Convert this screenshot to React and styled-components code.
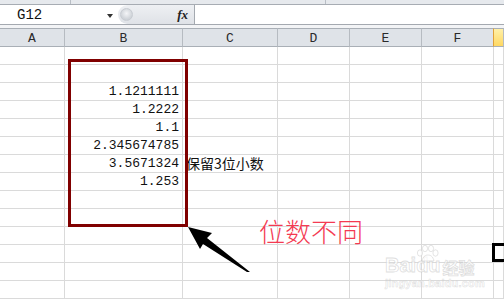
import React from "react";
import styled, { createGlobalStyle } from "styled-components";

const Global = createGlobalStyle`
  html, body { margin: 0; padding: 0; background: #fff; }
  body { width: 504px; height: 300px; overflow: hidden; }
`;

const Page = styled.div`
  position: relative;
  width: 504px;
  height: 300px;
  overflow: hidden;
  background: #fff;
  font-family: "Liberation Mono", monospace;
`;

const TopStrip = styled.div`
  height: 4px;
  background: #e6e9ed;
  border-bottom: 1px solid #a7acb3;
  display: flex;
`;

const StripSeg = styled.div`
  width: ${(p) => p.w}px;
  border-right: 1px solid #b9bec5;
`;

const FormulaBar = styled.div`
  display: flex;
  height: 19px;
  border-bottom: 1px solid #a4a9b0;
  background: #fff;
`;

const NameBox = styled.div`
  width: 118px;
  display: flex;
  align-items: center;
  justify-content: space-between;
  padding: 0 5px 0 17px;
  box-sizing: border-box;
  font-size: 14px;
  color: #111;
`;

const DropArrow = styled.span`
  width: 0;
  height: 0;
  border-left: 3.5px solid transparent;
  border-right: 3.5px solid transparent;
  border-top: 4px solid #333;
  margin-top: 2px;
`;

const FxArea = styled.div`
  width: 77px;
  display: flex;
  align-items: center;
  justify-content: space-between;
  padding: 0 6px 0 2px;
  box-sizing: border-box;
  background: linear-gradient(#eef0f3, #dfe2e7);
  border-radius: 10px 0 0 10px;
  border-right: 1px solid #a4a9b0;
`;

const RoundBtn = styled.span`
  width: 13px;
  height: 13px;
  border-radius: 50%;
  background: radial-gradient(circle at 50% 40%, #f4f5f7 0%, #d3d7dc 60%, #c2c7cd 100%);
  border: 1px solid #c8ccd2;
  box-sizing: border-box;
`;

const Fx = styled.span`
  font-family: "Liberation Serif", serif;
  font-style: italic;
  font-weight: bold;
  font-size: 13px;
  color: #222;
`;

const FormulaInput = styled.div`
  flex: 1;
  background: #fff;
`;

const Spacer = styled.div`
  height: 3px;
  background: #f3f4f6;
`;

const Sheet = styled.div`
  display: grid;
  grid-template-columns: 65px 118px 95px 72px 72px 72px 1fr;
`;

const HeaderCell = styled.div`
  height: 19px;
  box-sizing: border-box;
  border-top: 1px solid #a9afb6;
  border-bottom: 1px solid #a9afb6;
  border-right: 1px solid ${(p) => (p.next ? "#e0a13a" : "#b6bbc1")};
  background: ${(p) =>
    p.selected
      ? "linear-gradient(#fff0a8, #ffd862)"
      : "#dfe3e8"};
  display: flex;
  align-items: center;
  justify-content: center;
  font-size: 13px;
  color: #2a2a2a;
  padding-top: 1px;
`;

const Cell = styled.div`
  position: relative;
  height: 18px;
  box-sizing: border-box;
  border-right: 1px solid #dadada;
  border-bottom: 1px solid #dadada;
  display: flex;
  align-items: center;
  justify-content: ${(p) => (p.num ? "flex-end" : "flex-start")};
  padding: ${(p) => (p.num ? "0 3px 0 0" : "0 0 0 3px")};
  font-size: 13px;
  color: #111;
  white-space: nowrap;
  overflow: visible;
  z-index: ${(p) => (p.text ? 2 : 1)};
`;

const CjkText = styled.span`
  font-family: "Noto Sans CJK SC", sans-serif;
  font-size: 14px;
  line-height: 17px;
  color: #111;
`;

const ActiveCell = styled.div`
  position: absolute;
  left: -2px;
  top: -2px;
  width: 30px;
  height: 19px;
  border: 3px solid #000;
  box-sizing: border-box;
`;

const RedBox = styled.div`
  position: absolute;
  left: 68px;
  top: 59px;
  width: 120px;
  height: 168px;
  border: 3px solid #800000;
  box-sizing: border-box;
  z-index: 5;
`;

const Overlay = styled.svg`
  position: absolute;
  left: 0;
  top: 0;
  z-index: 6;
`;

const Note = styled.div`
  position: absolute;
  left: 259px;
  top: 214px;
  font-family: "Noto Sans CJK SC", sans-serif;
  font-weight: 300;
  font-size: 26px;
  line-height: 34px;
  color: #f43a52;
  z-index: 6;
`;

const Watermark = styled.div`
  position: absolute;
  left: 385px;
  top: 245px;
  width: 92px;
  display: flex;
  flex-direction: column;
  align-items: flex-start;
  z-index: 4;
  pointer-events: none;
`;

const MarkRow = styled.div`
  display: flex;
  align-items: flex-end;
  position: relative;
  height: 30px;
`;

const MarkText = styled.span`
  font-family: ${(p) => (p.cjk ? '"Noto Sans CJK SC", sans-serif' : '"Liberation Sans", sans-serif')};
  font-weight: bold;
  font-size: ${(p) => p.size}px;
  line-height: 1;
  color: rgba(255, 255, 255, 0.75);
  -webkit-text-stroke: 0.8px rgba(190, 190, 190, 0.5);
  margin-left: ${(p) => p.ml || 0}px;
`;

const MarkUrl = styled.span`
  font-family: "Liberation Sans", sans-serif;
  font-size: 11px;
  font-weight: bold;
  color: rgba(255, 255, 255, 0.75);
  -webkit-text-stroke: 0.6px rgba(190, 190, 190, 0.45);
  margin-top: 2px;
  letter-spacing: 0.2px;
`;

const Paw = styled.svg`
  position: absolute;
  left: 30px;
  top: 0;
`;

const columns = ["A", "B", "C", "D", "E", "F", ""];

const data = {
  3: { B: "1.1211111" },
  4: { B: "1.2222" },
  5: { B: "1.1" },
  6: { B: "2.345674785" },
  7: { B: "3.5671324", C: "保留3位小数" },
  8: { B: "1.253" },
};

export default function App() {
  const rows = Array.from({ length: 14 }, (_, i) => i + 1);
  const keys = ["A", "B", "C", "D", "E", "F", "G"];
  return (
    <Page>
      <Global />
      <TopStrip>
        <StripSeg w={70} />
        <StripSeg w={254} />
      </TopStrip>
      <FormulaBar>
        <NameBox>
          G12
          <DropArrow />
        </NameBox>
        <FxArea>
          <RoundBtn />
          <Fx>fx</Fx>
        </FxArea>
        <FormulaInput />
      </FormulaBar>
      <Spacer />
      <Sheet>
        {columns.map((c, i) => (
          <HeaderCell key={"h" + i} selected={i === 6} next={i === 5}>
            {c}
          </HeaderCell>
        ))}
        {rows.map((r) =>
          keys.map((k) => {
            const v = data[r] && data[r][k];
            const isNum = k === "B" && v;
            return (
              <Cell key={r + k} num={isNum} text={k === "C" && v}>
                {k === "C" && v ? <CjkText>{v}</CjkText> : v}
                {k === "G" && r === 12 && <ActiveCell />}
              </Cell>
            );
          })
        )}
      </Sheet>
      <RedBox />
      <Overlay width="504" height="300" viewBox="0 0 504 300">
        <polygon
          points="188,227 212,233 207,238 250,272 247,272 203,244 200,249"
          fill="#000"
        />
      </Overlay>
      <Note>位数不同</Note>
      <Watermark>
        <MarkRow>
          <Paw width="24" height="18" viewBox="0 0 24 18">
            <g fill="rgba(255,255,255,0.7)" stroke="rgba(190,190,190,0.5)" strokeWidth="0.8">
              <ellipse cx="5" cy="8" rx="2.6" ry="3.2" />
              <ellipse cx="10" cy="3.5" rx="2.6" ry="3.2" />
              <ellipse cx="16" cy="3.5" rx="2.6" ry="3.2" />
              <ellipse cx="20.5" cy="8" rx="2.6" ry="3.2" />
              <path d="M7 16 C8 11 11 10 13 10 C15 10 18 11 19 16 Z" />
            </g>
          </Paw>
          <MarkText size={20}>Bai</MarkText>
          <MarkText size={20}>du</MarkText>
          <MarkText size={16} cjk ml={2}>经验</MarkText>
        </MarkRow>
        <MarkUrl>jingyan.baidu.com</MarkUrl>
      </Watermark>
    </Page>
  );
}
